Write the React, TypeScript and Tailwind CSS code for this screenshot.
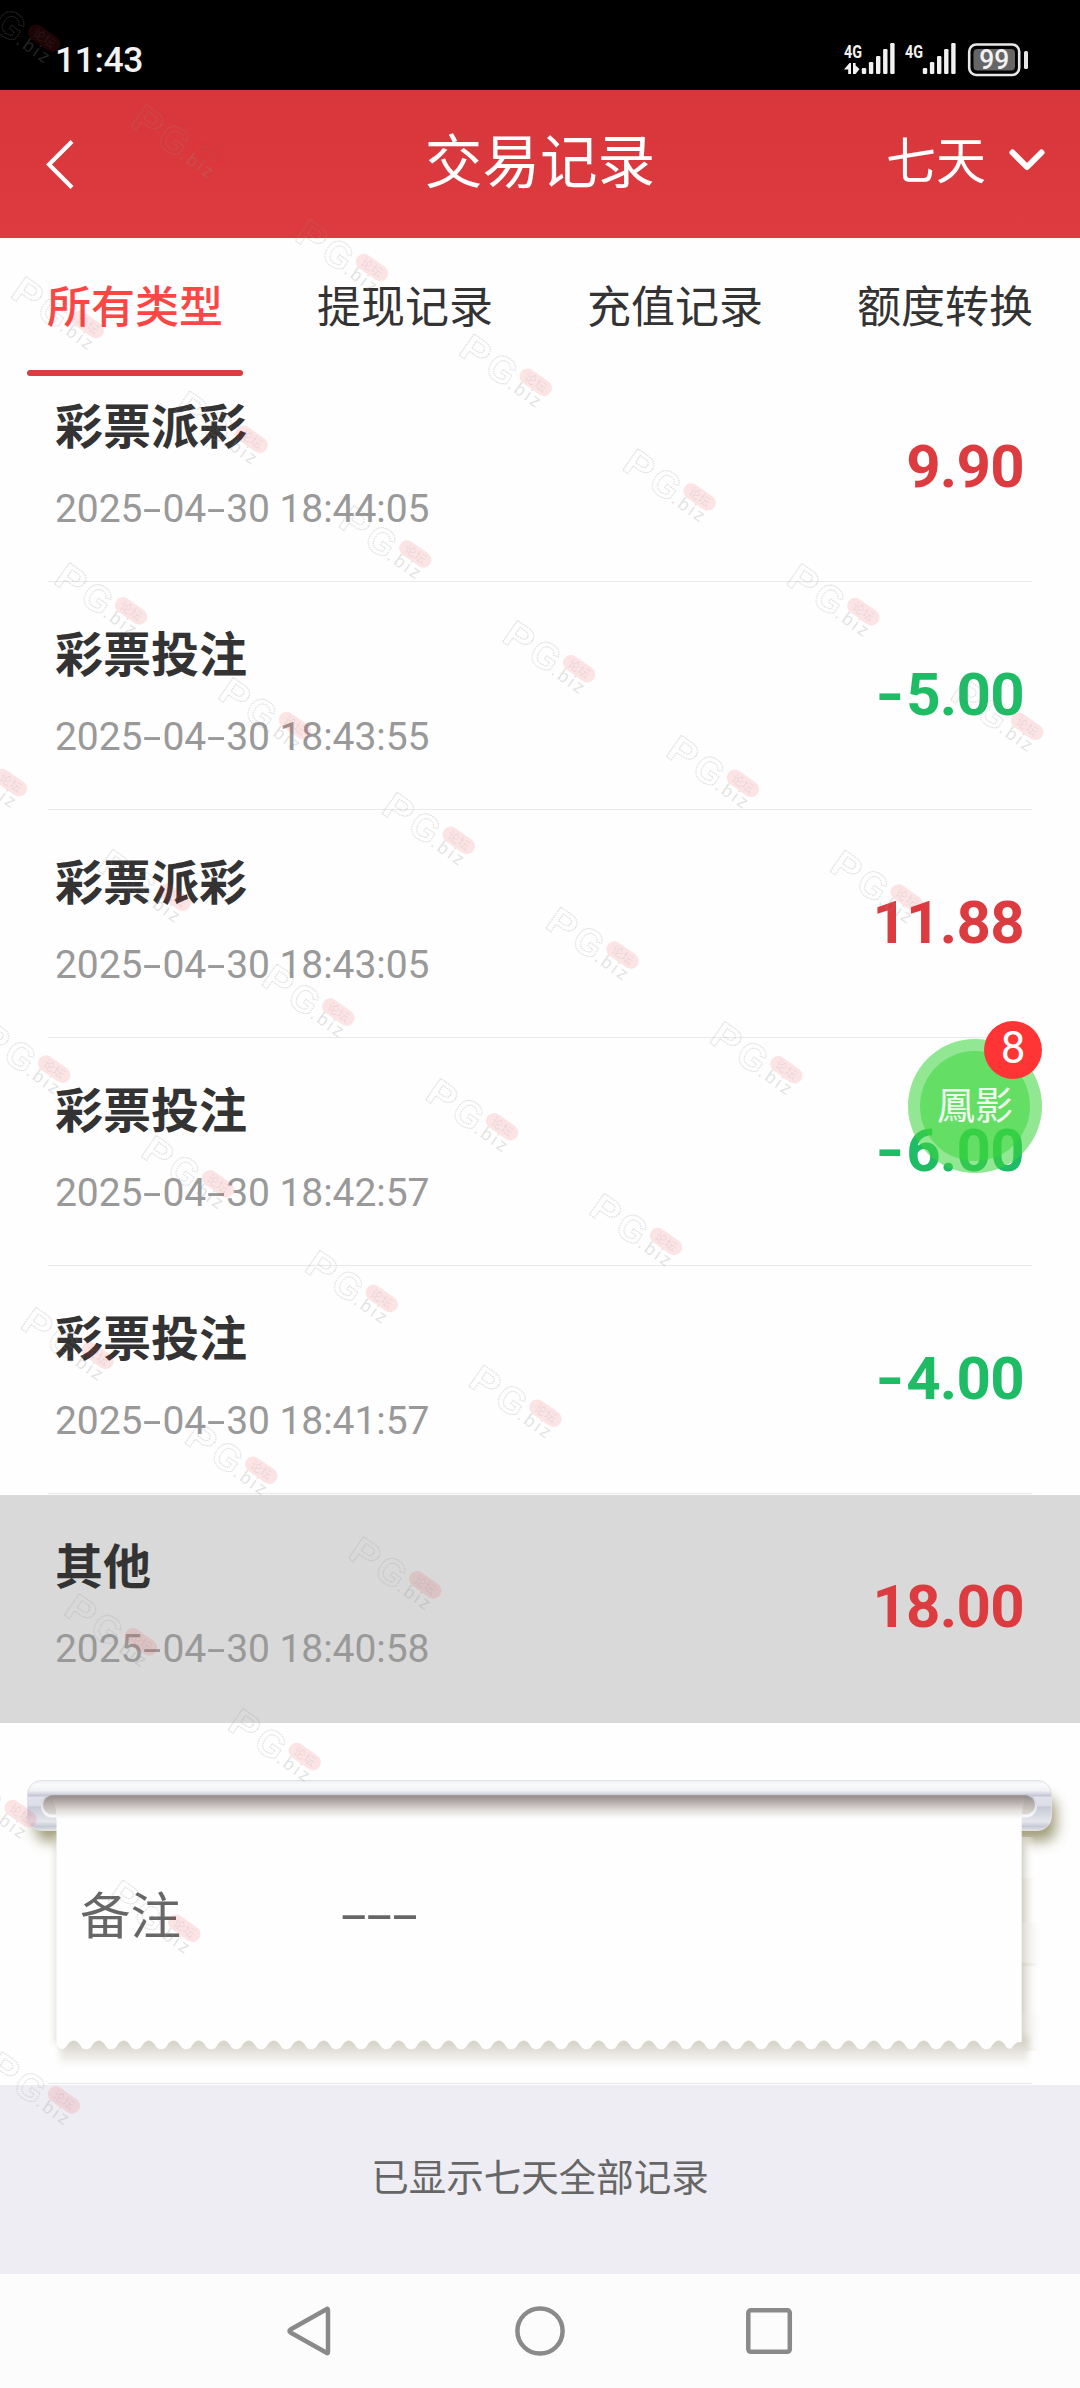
import { Fragment } from "react";

type RecordItem = {
  title: string;
  time: string;
  amount: string;
  active?: boolean;
};

const tabs = ["所有类型", "提现记录", "充值记录", "额度转换"];

const records: RecordItem[] = [
  { title: "彩票派彩", time: "2025-04-30 18:44:05", amount: "9.90" },
  { title: "彩票投注", time: "2025-04-30 18:43:55", amount: "-5.00" },
  { title: "彩票派彩", time: "2025-04-30 18:43:05", amount: "11.88" },
  { title: "彩票投注", time: "2025-04-30 18:42:57", amount: "-6.00" },
  { title: "彩票投注", time: "2025-04-30 18:41:57", amount: "-4.00" },
  { title: "其他", time: "2025-04-30 18:40:58", amount: "18.00", active: true },
];

const CJK = "font-['Noto_Sans_CJK_SC',sans-serif]";
const NUM = "font-[Roboto,'Noto_Sans_CJK_SC',sans-serif]";

function SignalBars({ x }: { x: number }) {
  return (
    <>
      {[6, 12, 18, 25, 31].map((h, i) => (
        <rect key={h} x={x + i * 7.1} y={39 - h} width="4.4" height={h} rx="1.2" fill="#f2f2f2" />
      ))}
    </>
  );
}

function StatusBar() {
  return (
    <div className="h-[90px] bg-black flex justify-between items-start pl-[55px] pr-[52px] pt-[35px]">
      <span className={`${NUM} text-[35.5px] leading-[50px] tracking-[-0.4px] font-medium text-[#f2f2f2]`}>11:43</span>
      <svg width="188" height="50" viewBox="0 0 188 50">
        <g fill="#f2f2f2" fontFamily="Roboto, sans-serif" fontWeight="700" fontSize="19">
          <text x="4" y="22.5" textLength="18" lengthAdjust="spacingAndGlyphs">4G</text>
          <text x="65" y="22.5" textLength="18" lengthAdjust="spacingAndGlyphs">4G</text>
        </g>
        {/* 上下行数据箭头 */}
        <path d="M4 34.500L9.500 28H11V39H8.200V34.500ZM13 28H15.600V30.500L19.500 34L15.600 39H13Z" fill="#f2f2f2" />
        <SignalBars x={21.8} />
        <SignalBars x={82.8} />
        <rect x="129.2" y="9.5" width="50" height="30.500" rx="7" fill="none" stroke="#e8e8e8" strokeWidth="2.6" />
        <rect x="133.5" y="14" width="41.500" height="21.500" rx="4" fill="#666" />
        <text x="154.300" y="34" textAnchor="middle" fill="#f2f2f2" fontFamily="Roboto, sans-serif" fontWeight="500" fontSize="27" textLength="30" lengthAdjust="spacingAndGlyphs">99</text>
        <rect x="184" y="16" width="4" height="18" rx="1.5" fill="#e8e8e8" />
      </svg>
    </div>
  );
}

function Header() {
  return (
    <header className="h-[148px] bg-gradient-to-b from-[#d7363a] to-[#dd3b40] text-white grid grid-cols-[1fr_auto_1fr] items-center px-[34px]">
      <svg className="ml-[11px]" width="30" height="52" viewBox="0 0 30 52" fill="none" stroke="currentColor" strokeWidth="4.2">
        <path d="M27 3.500L4 26.500L27 49.500" />
      </svg>
      <h1 className={`${CJK} text-[57.6px] leading-[80px] -mt-[13px]`}>交易记录</h1>
      <div className="flex items-center justify-end gap-[22px] -mt-2">
        <span className={`${CJK} text-[50px] leading-[70px] -mt-[6px]`}>七天</span>
        <svg width="38" height="24" viewBox="0 0 38 24" fill="none" stroke="currentColor" strokeWidth="6" strokeLinecap="round" strokeLinejoin="round">
          <path d="M4.500 4.500L19 19L33.500 4.500" />
        </svg>
      </div>
    </header>
  );
}

function Tabs() {
  return (
    <nav className="h-[138px] grid grid-cols-4">
      {tabs.map((tab, i) => (
        <div key={tab} className={`${CJK} flex flex-col items-center justify-between pt-[34px] text-[44px] leading-[64px] ${i === 0 ? "text-[#fc4646] font-medium" : "text-[#333]"}`}>
          <span>{tab}</span>
          {i === 0 && <i className="block w-[216px] h-[6px] rounded-full bg-[#dc3b40]" />}
        </div>
      ))}
    </nav>
  );
}

// 连字符比字体默认的宽
function Time({ value }: { value: string }) {
  return (
    <>
      {value.split("-").map((part, i) => (
        <Fragment key={i}>
          {i > 0 && <span className="inline-block w-[20px] text-center scale-x-[1.700]">-</span>}
          {part}
        </Fragment>
      ))}
    </>
  );
}

function Row({ item }: { item: RecordItem }) {
  const out = item.amount.startsWith("-");
  return (
    <li className={`h-[228px] px-[48px] pb-px ${item.active ? "bg-[#d9d9d9]" : ""}`}>
      <div className={`h-full flex justify-between pl-[7px] pr-[8px] border-b ${item.active ? "border-transparent" : "border-[#e6eaea]"}`}>
        <div>
          <h2 className={`${CJK} mt-[33px] text-[48px] leading-[70px] font-bold text-[#333]`}>{item.title}</h2>
          <p className={`${NUM} mt-[23px] text-[39px] leading-[56px] tracking-[-0.06px] text-[#999]`}>
            <Time value={item.time} />
          </p>
        </div>
        <div className={`${NUM} flex mt-[72px] text-[60px] leading-[80px] tracking-[-0.7px] font-bold ${out ? "text-[#1fbc66]" : "text-[#dc3b40]"}`}>
          {out && <span className="inline-block scale-x-[1.250] mr-[5px]">-</span>}
          <span>{out ? item.amount.slice(1) : item.amount}</span>
        </div>
      </div>
    </li>
  );
}

function paperPath() {
  let d = "M56.500 92Q56.500 76 70 76H1008Q1021.700 76 1021.700 92V319";
  // 锯齿边：每 25px 一个缺口
  d += "Q1016 318 1011.200 325.500";
  for (let x = 998.7; x > 60; x -= 25) {
    d += `Q${x + 9} 327 ${x + 6} 321.500Q${x} 313.500 ${x - 6} 321.500Q${x - 9} 327 ${x - 12.500} 326`;
  }
  return `${d}L56.500 322Z`;
}

function NotePanel() {
  return (
    <section className="h-[362px] relative">
      <svg className="absolute inset-0" width="1080" height="362" viewBox="0 0 1080 362">
        <defs>
          <linearGradient id="rail" x1="0" y1="0" x2="0" y2="1">
            <stop offset="0" stopColor="#eceff1" />
            <stop offset="0.08" stopColor="#fafafc" />
            <stop offset="0.2" stopColor="#f1f2f6" />
            <stop offset="0.3" stopColor="#c6c7d4" />
            <stop offset="0.34" stopColor="#e0e1ea" />
            <stop offset="0.5" stopColor="#dcdde6" />
            <stop offset="0.53" stopColor="#c6cad6" />
            <stop offset="0.82" stopColor="#e6e7ec" />
            <stop offset="0.92" stopColor="#c6c9d6" />
            <stop offset="1" stopColor="#e4e5e6" />
          </linearGradient>
          <linearGradient id="slot" x1="0" y1="0" x2="0" y2="1">
            <stop offset="0" stopColor="#958b89" />
            <stop offset="0.3" stopColor="#b8b0ae" />
            <stop offset="0.65" stopColor="#e3e0de" />
            <stop offset="1" stopColor="#fefefe" />
          </linearGradient>
          <linearGradient id="rim" x1="0" y1="0" x2="0" y2="1">
            <stop offset="0" stopColor="#c6c7d4" />
            <stop offset="0.6" stopColor="#e6e7ee" />
            <stop offset="1" stopColor="#fafafc" />
          </linearGradient>
          <linearGradient id="hole" x1="0" y1="0" x2="0" y2="1">
            <stop offset="0" stopColor="#958b89" />
            <stop offset="0.5" stopColor="#bcb5b1" />
            <stop offset="1" stopColor="#dedad6" />
          </linearGradient>
          <linearGradient id="side" x1="0" y1="0" x2="1" y2="0">
            <stop offset="0" stopColor="#cfccbe" />
            <stop offset="1" stopColor="#fefefe" stopOpacity="0" />
          </linearGradient>
          <linearGradient id="foot" x1="0" y1="0" x2="0" y2="1">
            <stop offset="0" stopColor="#cfccbf" />
            <stop offset="0.45" stopColor="#dfddd4" />
            <stop offset="1" stopColor="#faf9f7" />
          </linearGradient>
          <filter id="soft" x="-40%" y="-60%" width="180%" height="240%">
            <feGaussianBlur stdDeviation="7" />
          </filter>
          <filter id="edge" x="-5%" y="-20%" width="110%" height="140%">
            <feGaussianBlur stdDeviation="3" />
          </filter>
          <filter id="edgeV" x="-100%" y="-5%" width="300%" height="110%">
            <feGaussianBlur stdDeviation="3" />
          </filter>
        </defs>

        {/* 打印槽阴影 */}
        <rect x="35" y="80" width="60" height="38" rx="12" fill="#8f8a60" opacity="0.85" filter="url(#soft)" />
        <rect x="990" y="74" width="66" height="44" rx="12" fill="#8f8a60" opacity="0.85" filter="url(#soft)" />

        {/* 纸张侧边阴影 */}
        <rect x="1021" y="114" width="14" height="86" fill="url(#side)" />
        <rect x="1021" y="155" width="18" height="45" fill="url(#side)" opacity="0.5" />
        <rect x="1021" y="200" width="21" height="40" fill="url(#side)" opacity="0.85" />
        <rect x="1021" y="240" width="21" height="3" fill="url(#side)" />
        <rect x="1021" y="240" width="21" height="3" fill="url(#side)" />
        <rect x="1021" y="243" width="18" height="47" fill="url(#side)" />
        <rect x="1021" y="290" width="21" height="38" fill="url(#side)" opacity="0.85" />
        <rect x="54" y="110" width="10" height="210" fill="#d6d4c8" opacity="0.6" filter="url(#edgeV)" />
        <rect x="60" y="313" width="968" height="28" fill="url(#foot)" filter="url(#edge)" />

        <rect x="27.500" y="57.500" width="1024" height="50" rx="14" fill="url(#rail)" stroke="#dfe1e4" />
        <rect x="41" y="71.500" width="996" height="23" rx="11" fill="url(#rim)" />
        <rect x="43" y="72.500" width="992" height="19" rx="9.500" fill="url(#hole)" />
        <path d={paperPath()} fill="#fefefe" />
        <path d="M50 72.500H1028Q1021.700 80 1021.700 96H56.500Q56.500 80 50 72.500Z" fill="url(#slot)" />
        <path d="M48 360.500H1032" stroke="#e6e8ee" />
      </svg>
      <div className="relative flex items-start pt-[151px] pl-[80px] text-[#666]">
        <span className={`${CJK} w-[261px] text-[50.5px] leading-[76px]`}>备注</span>
        <span className={`${NUM} text-[50px] leading-[76px] pt-[3px] scale-x-[1.850] origin-left`}>---</span>
      </div>
    </section>
  );
}

function FloatingButton() {
  return (
    <div className="absolute left-[908px] top-[1039px] size-[134px] rounded-full bg-[#3cd53c]/56 flex items-center justify-center">
      <div className="size-[110px] rounded-full bg-[#3cd53c]/53 flex items-center justify-center">
        <span className={`${CJK} text-[38px] leading-[54px] -mt-[6px] whitespace-nowrap text-white/90`}>鳳影</span>
      </div>
      <span className={`${NUM} absolute left-[76px] -top-[18px] size-[58px] rounded-full bg-[#ff3434] text-white text-[44px] leading-[54px] text-center`}>8</span>
    </div>
  );
}

function NavBar() {
  return (
    <div className="h-[114px] bg-[#fcfcfc] flex items-center justify-between px-[286px]">
      <svg width="48" height="52" viewBox="0 0 48 52" fill="none" stroke="#8a8a8a" strokeWidth="4.5" strokeLinejoin="round">
        <path d="M40.500 4.200Q42 3.200 42 5.500V46.500Q42 48.800 40.500 47.800L4.500 27.500Q2.500 26 4.500 24.500Z" />
      </svg>
      <svg width="52" height="52" viewBox="0 0 52 52" fill="none" stroke="#8a8a8a" strokeWidth="4.5">
        <circle cx="26" cy="26" r="22.600" />
      </svg>
      <svg width="48" height="52" viewBox="0 0 48 52" fill="none" stroke="#8a8a8a" strokeWidth="4.5">
        <rect x="2.300" y="5.300" width="41.500" height="41.500" rx="2.500" />
      </svg>
    </div>
  );
}

function Watermark() {
  const marks: { x: number; y: number }[] = [];
  for (let j = 0; j <= 8; j++) {
    for (let i = -3; i + j <= 5; i++) {
      marks.push({ x: 130 + 163.8 * i + 43.4 * j, y: 104 + 114.7 * i + 286.4 * j });
    }
  }
  return (
    <svg className="absolute inset-0 pointer-events-none" width="1080" height="2388" viewBox="0 0 1080 2388">
      {marks
        .filter(({ x, y }) => x > -95 && y > -70)
        .map(({ x, y }) => (
          <g key={`${x}-${y}`} transform={`translate(${x} ${y + 21}) rotate(35)`} fontFamily="'Liberation Sans', 'Noto Sans CJK SC', sans-serif">
            <g fill="none" stroke="#909090" strokeOpacity="0.28" strokeWidth="1.200" strokeDasharray="1.600 0.800" fontSize="38" fontWeight="700">
              <text x="-1" y="0" textLength="28" lengthAdjust="spacingAndGlyphs">P</text>
              <text x="31" y="0" textLength="28" lengthAdjust="spacingAndGlyphs">G</text>
            </g>
            <text x="59" y="-1" fontSize="18" fill="#909090" fillOpacity="0.25" textLength="36" lengthAdjust="spacing">.biz</text>
            <rect x="62" y="-30" width="36" height="16" rx="8" fill="#eb2832" fillOpacity="0.12" />
            <text x="68" y="-17.500" fontSize="12" fill="#808080" fillOpacity="0.16">论坛</text>
          </g>
        ))}
    </svg>
  );
}

export default function App() {
  return (
    <div className="relative w-[1080px] h-[2388px] overflow-hidden bg-[#fefefe]">
      <StatusBar />
      <Header />
      <Tabs />
      <ul className="-mt-[21px]">
        {records.map((item) => (
          <Row key={item.time} item={item} />
        ))}
      </ul>
      <NotePanel />
      <footer className={`${CJK} h-[189px] bg-[#eeedf3] flex items-center justify-center pb-[9px] text-[37.5px] leading-[54px] text-[#666]`}>
        已显示七天全部记录
      </footer>
      <NavBar />
      <FloatingButton />
      <Watermark />
    </div>
  );
}
